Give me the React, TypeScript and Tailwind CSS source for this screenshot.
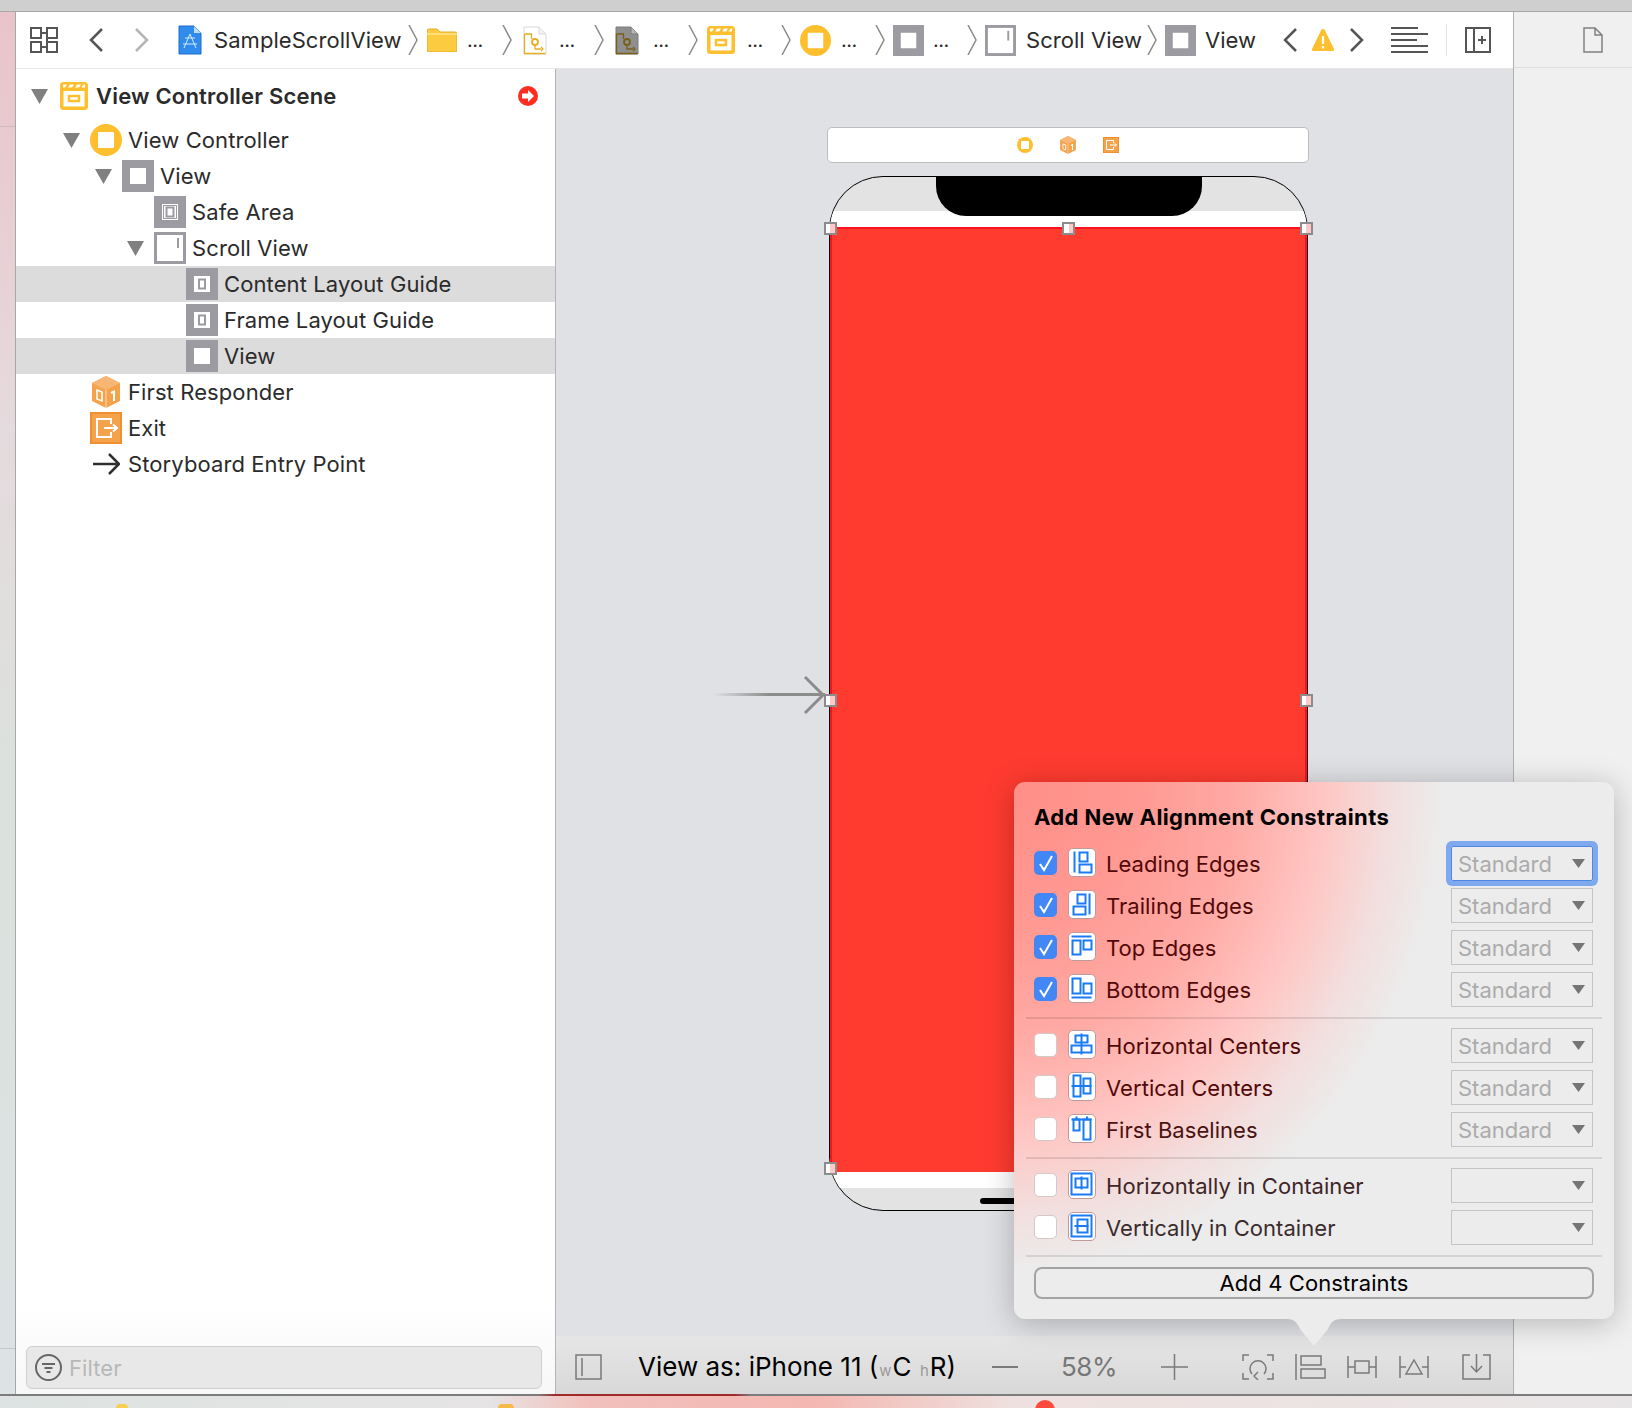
import type { ReactNode } from "react";

const BLUE = "#1a7cf5";
const GRAY = "#9b9ba1";
const YELLOW = "#fdbf2d";
const ORANGE = "#f4a24b";

function TileGlyph({ children }: { children: ReactNode }) {
  return (
    <div className="w-[28px] h-[29px] rounded-[5px] bg-white border-[1.5px] border-[#c09a9a] shrink-0 -mt-[4px]">
      <svg width="25" height="26" viewBox="1.5 1.5 25 26" fill="none" stroke={BLUE} strokeWidth="2">
        {children}
      </svg>
    </div>
  );
}

const GLYPHS: Record<string, ReactNode> = {
  leading: (<><path d="M7 4v21" /><rect x="12" y="5" width="8" height="9" /><rect x="12" y="17" width="12" height="8" /></>),
  trailing: (<><path d="M22 4v21" /><rect x="10" y="5" width="8" height="9" /><rect x="6" y="17" width="12" height="8" /></>),
  top: (<><path d="M4 5h20" /><rect x="5" y="9" width="8" height="14" /><rect x="16" y="9" width="8" height="9" /></>),
  bottom: (<><path d="M4 24h20" /><rect x="5" y="5" width="8" height="15" /><rect x="16" y="10" width="8" height="10" /></>),
  hcenter: (<><path d="M14 4v21" /><rect x="8" y="6" width="12" height="7" /><rect x="4" y="16" width="20" height="7" /></>),
  vcenter: (<><path d="M4 14.5h20" /><rect x="6" y="4" width="7" height="21" /><rect x="16" y="7" width="7" height="15" /></>),
  baseline: (<><path d="M4 6h20" /><rect x="6" y="6" width="6" height="11" /><rect x="16" y="6" width="7" height="20" /><path d="M9 3v3M19.500 3v3" /></>),
  hcontainer: (<><rect x="4" y="4" width="20" height="21" /><rect x="8" y="9" width="12" height="9" /><path d="M14 7v13" /></>),
  vcontainer: (<><rect x="4" y="4" width="20" height="21" /><rect x="10" y="8" width="10" height="13" /><path d="M7 14.500h14" /></>),
};

const CONSTRAINT_ROWS = [
  [
    { label: "Leading Edges", glyph: "leading", checked: true, value: "Standard", focus: true, color: "text-[#520808]" },
    { label: "Trailing Edges", glyph: "trailing", checked: true, value: "Standard", color: "text-[#520808]" },
    { label: "Top Edges", glyph: "top", checked: true, value: "Standard", color: "text-[#520808]" },
    { label: "Bottom Edges", glyph: "bottom", checked: true, value: "Standard", color: "text-[#520808]" },
  ],
  [
    { label: "Horizontal Centers", glyph: "hcenter", value: "Standard", color: "text-[#520808]" },
    { label: "Vertical Centers", glyph: "vcenter", value: "Standard", color: "text-[#520808]" },
    { label: "First Baselines", glyph: "baseline", value: "Standard", color: "text-[#4a1212]" },
  ],
  [
    { label: "Horizontally in Container", glyph: "hcontainer", value: "", color: "text-[#3f2526]" },
    { label: "Vertically in Container", glyph: "vcontainer", value: "", color: "text-[#3a2b2c]" },
  ],
];

function GrayTile({ size = 32, inner }: { size?: number; inner?: "view" | "guide" | "safe" | "scroll" }) {
  if (inner === "scroll") {
    return (
      <svg width={size} height={size} viewBox="0 0 32 32" className="shrink-0">
        <rect x="1.500" y="1.500" width="29" height="29" fill="#fff" stroke={GRAY} strokeWidth="3" />
        <rect x="23" y="6" width="2" height="10" fill={GRAY} />
      </svg>
    );
  }
  return (
    <svg width={size} height={size} viewBox="0 0 32 32" className="shrink-0">
      <rect width="32" height="32" fill={GRAY} />
      <rect x="8" y="8" width="16" height="16" fill="#fff" />
      {inner === "guide" && <rect x="13" y="11.500" width="6" height="9" fill="#fff" stroke={GRAY} strokeWidth="2" />}
      {inner === "safe" && (
        <>
          <rect x="9.500" y="9.500" width="13" height="13" fill="#fff" stroke={GRAY} strokeWidth="1" />
          <rect x="12.500" y="11.500" width="7" height="9" fill="#fff" stroke={GRAY} strokeWidth="2" />
        </>
      )}
    </svg>
  );
}

function SceneIcon({ w = 28, h = 28 }: { w?: number; h?: number }) {
  return (
    <svg width={w} height={h} viewBox="0 0 28 28" className="shrink-0">
      <rect width="28" height="28" rx="3.500" fill={YELLOW} />
      <rect x="3.500" y="9" width="21" height="15.500" fill="#fff" />
      <path d="M3 2.500h4l-2 3H3zM10 2.500h4l-2 3H8zM17 2.500h4l-2 3h-4zM23.500 2.500H25v3h-3.500z" fill="#fff" />
      <rect x="9" y="14" width="10" height="5" fill="#fff" stroke={YELLOW} strokeWidth="2.500" />
    </svg>
  );
}

function ControllerIcon({ size = 32 }: { size?: number }) {
  return (
    <svg width={size} height={size} viewBox="0 0 32 32" className="shrink-0">
      <circle cx="16" cy="16" r="16" fill={YELLOW} />
      <rect x="8" y="8" width="16" height="16" rx="1" fill="#fff" />
    </svg>
  );
}

function CubeIcon({ w = 28, h = 32 }: { w?: number; h?: number }) {
  return (
    <svg width={w} height={h} viewBox="0 0 28 32" className="shrink-0">
      <path d="M14 0l14 7v18l-14 7L0 25V7z" fill={ORANGE} />
      <path d="M14 0l14 7-14 7L0 7z" fill="#f7b673" />
      <path d="M14 14v18" stroke="#fff" strokeWidth="1" opacity="0.7" />
      <path d="M5 14l5 2v9l-5-2z" fill="none" stroke="#fff" strokeWidth="1.500" />
      <path d="M19 17l3-1.500V25" fill="none" stroke="#fff" strokeWidth="2" />
    </svg>
  );
}

function ExitIcon({ size = 32 }: { size?: number }) {
  return (
    <svg width={size} height={size} viewBox="0 0 32 32" className="shrink-0">
      <rect width="32" height="32" fill={ORANGE} />
      <rect x="1" y="1" width="30" height="30" fill="none" stroke="#ef8f2f" strokeWidth="2" />
      <path d="M21 12V7H7v18h14v-5" fill="none" stroke="#fff" strokeWidth="2" />
      <path d="M14 16h13M23 12.500l4 3.500-4 3.500" fill="none" stroke="#fff" strokeWidth="2" />
    </svg>
  );
}

function Triangle({ className = "" }: { className?: string }) {
  return (
    <svg width="17" height="15" viewBox="0 0 17 15" className={`shrink-0 ${className}`}>
      <path d="M0 0h17L8.500 15z" fill="#808080" />
    </svg>
  );
}

const TREE = [
  { label: "View Controller", indent: 47, arrow: true, icon: <ControllerIcon />, gap: "ml-[6px]" },
  { label: "View", indent: 79, arrow: true, icon: <GrayTile inner="view" />, gap: "ml-[6px]" },
  { label: "Safe Area", indent: 138, icon: <GrayTile inner="safe" />, gap: "ml-[6px]" },
  { label: "Scroll View", indent: 111, arrow: true, icon: <GrayTile inner="scroll" />, gap: "ml-[6px]" },
  { label: "Content Layout Guide", indent: 170, icon: <GrayTile inner="guide" />, selected: true, gap: "ml-[6px]" },
  { label: "Frame Layout Guide", indent: 170, icon: <GrayTile inner="guide" />, gap: "ml-[6px]" },
  { label: "View", indent: 170, icon: <GrayTile inner="view" />, selected: true, gap: "ml-[6px]" },
  { label: "First Responder", indent: 76, icon: <CubeIcon />, gap: "ml-[8px]" },
  { label: "Exit", indent: 74, icon: <ExitIcon />, gap: "ml-[6px]" },
  {
    label: "Storyboard Entry Point",
    indent: 77,
    icon: (
      <svg width="27" height="22" viewBox="0 0 27 22" className="shrink-0">
        <path d="M0 11h26M16 1l10 10-10 10" fill="none" stroke="#2e2e2e" strokeWidth="2.500" />
      </svg>
    ),
    gap: "ml-[8px]",
  },
];

function Crumb({ className = "" }: { className?: string }) {
  return (
    <svg width="10" height="30" viewBox="0 0 10 30" className={`shrink-0 ${className}`}>
      <path d="M1 0l8 15-8 15" fill="none" stroke="#8a8a8a" strokeWidth="1.500" />
    </svg>
  );
}

function Chevron({ dir, color, className = "" }: { dir: "left" | "right"; color: string; className?: string }) {
  return (
    <svg width="14" height="24" viewBox="0 0 14 24" className={`shrink-0 ${className}`}>
      <path d={dir === "left" ? "M13 1L2 12l11 11" : "M1 1l11 11L1 23"} fill="none" stroke={color} strokeWidth="2.500" />
    </svg>
  );
}

function Dots({ className = "" }: { className?: string }) {
  return <span className={`shrink-0 w-[16px] text-[20px] leading-none text-[#2b2b2b] tracking-[-0.5px] ${className}`}>...</span>;
}

function FileIcon({ dark }: { dark?: boolean }) {
  const stroke = dark ? "#7a5f14" : "#e8ae22";
  return (
    <svg width="24" height="29" viewBox="0 0 24 29" className="shrink-0">
      <path d="M1 1h15l7 7v20H1z" fill={dark ? "#8f8f8f" : "#fff"} stroke={dark ? "#7d7d7d" : "#d8d8d8"} strokeWidth="1" />
      <path d="M16 1v7h7" fill={dark ? "#b5b5b5" : "#f2f2f2"} stroke={dark ? "#7d7d7d" : "#d8d8d8"} strokeWidth="1" />
      <path d="M1.500 8h7v5M12 19v4h6M18 21l2 2-2 2M1.500 8v19.500h21" fill="none" stroke={stroke} strokeWidth="1.300" />
      <circle cx="12" cy="16" r="3" fill="none" stroke={stroke} strokeWidth="1.800" />
    </svg>
  );
}

function Toolbar() {
  return (
    <div className="h-[56px] shrink-0 bg-white flex items-center text-[22px] leading-none text-[#2b2b2b] tracking-[0.05px] whitespace-nowrap">
      <svg width="28" height="26" viewBox="0 0 28 26" className="shrink-0 ml-[14px]" fill="none" stroke="#555" strokeWidth="2">
        <path d="M1 1h10v10H1zM17 1h10v10H17zM1 15h10v10H1zM17 15h10v10H17z" />
        <path d="M11 6h6M11 20h6M17 11v4" />
      </svg>
      <Chevron dir="left" color="#555" className="ml-[31px]" />
      <Chevron dir="right" color="#b5b5b5" className="ml-[32px]" />
      <svg width="24" height="30" viewBox="0 0 24 30" className="shrink-0 ml-[29px]">
        <path d="M1 1h15l7 7v21H1z" fill="#2f8cec" stroke="#1c6fca" strokeWidth="1" />
        <path d="M16 1v7h7z" fill="#bcdcf9" />
        <path d="M12 9l-6 14M12 9l6 14M5 19h14M7 13h10" fill="none" stroke="#d6eafc" strokeWidth="1" />
      </svg>
      <span className="ml-[12px] w-[186px] shrink-0">SampleScrollView</span>
      <Crumb className="ml-[8px]" />
      <svg width="30" height="24" viewBox="0 0 30 24" className="shrink-0 ml-[9px]">
        <path d="M0 3a2 2 0 012-2h8l3 3h15a2 2 0 012 2v16a2 2 0 01-2 2H2a2 2 0 01-2-2z" fill="#fccb3f" stroke="#e4ad2c" strokeWidth="1" />
        <path d="M0 6h30" stroke="#ffe48a" strokeWidth="1.500" />
      </svg>
      <Dots className="ml-[10px]" />
      <Crumb className="ml-[19px]" />
      <div className="ml-[11px]"><FileIcon /></div>
      <Dots className="ml-[12px]" />
      <Crumb className="ml-[19px]" />
      <div className="ml-[11px]"><FileIcon dark /></div>
      <Dots className="ml-[14px]" />
      <Crumb className="ml-[19px]" />
      <div className="ml-[9px]"><SceneIcon /></div>
      <Dots className="ml-[12px]" />
      <Crumb className="ml-[18px]" />
      <div className="ml-[9px]"><ControllerIcon size={31} /></div>
      <Dots className="ml-[10px]" />
      <Crumb className="ml-[18px]" />
      <div className="ml-[8px]"><GrayTile size={31} inner="view" /></div>
      <Dots className="ml-[9px]" />
      <Crumb className="ml-[18px]" />
      <div className="ml-[8px]"><GrayTile size={31} inner="scroll" /></div>
      <span className="ml-[10px] w-[114px] shrink-0">Scroll View</span>
      <Crumb className="ml-[7px]" />
      <div className="ml-[8px]"><GrayTile size={31} inner="view" /></div>
      <span className="ml-[9px] w-[50px] shrink-0">View</span>
      <Chevron dir="left" color="#555" className="ml-[28px]" />
      <svg width="24" height="24" viewBox="0 0 24 24" className="shrink-0 ml-[14px]">
        <path d="M12 1c1 0 1.500.5 2 1.500l9 18.500c.5 1.200-.2 2-1.500 2h-19c-1.300 0-2-.8-1.500-2l9-18.500C10.500 1.500 11 1 12 1z" fill={YELLOW} />
        <path d="M12 8v8M12 18v2.500" stroke="#fff" strokeWidth="2.200" />
      </svg>
      <Chevron dir="right" color="#555" className="ml-[15px]" />
      <svg width="37" height="26" viewBox="0 0 37 26" className="shrink-0 ml-[27px]" stroke="#555" strokeWidth="2">
        <path d="M0 1h27M0 7h37M0 13h26M0 19h37M0 25h37" />
      </svg>
      <div className="w-px h-[32px] bg-[#e2e2e2] shrink-0 ml-[18px]" />
      <svg width="26" height="26" viewBox="0 0 26 26" className="shrink-0 ml-[18px]" fill="none" stroke="#555" strokeWidth="2">
        <path d="M1 1h24v24H1zM9 1v24M17 9v8M13 13h8" />
      </svg>
    </div>
  );
}

function BarIcon({ children, className = "", w = 30 }: { children: ReactNode; className?: string; w?: number }) {
  return (
    <svg width={w} height="26" viewBox={`0 0 ${w} 26`} fill="none" stroke="#7a7a7a" strokeWidth="1.500" className={`shrink-0 ${className}`}>
      {children}
    </svg>
  );
}

function Popover() {
  return (
    <div className="absolute left-[1014px] top-[782px] w-[600px]">
      <div className="h-[537px] rounded-[11px] bg-[radial-gradient(ellipse_430px_490px_at_0_0,#ff8e87_0%,#ff9a93_30%,#ffaaa5_52%,#ffc6c3_72%,#f2dedd_87%,#ececec_100%)] bg-[#ececec] shadow-[0_4px_30px_rgba(0,0,0,0.25)] pt-[22px] flex flex-col">
        <div className="px-[20px] h-[26px] mb-[13px] text-[22px] leading-[26px] font-bold text-black tracking-[0.4px]">
          Add New Alignment Constraints
        </div>
        {CONSTRAINT_ROWS.map((group, i) => (
          <div key={i}>
            {i > 0 && <div className="h-[2px] mx-[12px] bg-black/10 mt-[6px] mb-[6px]" />}
            {group.map((row) => (
              <div key={row.label} className="h-[42px] flex items-center pl-[20px] pr-[21px]">
                <div className={`w-[23px] h-[24px] rounded-[5px] shrink-0 -mt-[3px] flex items-center justify-center ${row.checked ? "bg-[#4287f5]" : "bg-white border border-[#d5c8c8]"}`}>
                  {row.checked && (
                    <svg width="16" height="18" viewBox="0 0 16 18">
                      <path d="M2 10l4 6L14 2" fill="none" stroke="#fff" strokeWidth="2" />
                    </svg>
                  )}
                </div>
                <div className="ml-[11px]">
                  <TileGlyph>{GLYPHS[row.glyph]}</TileGlyph>
                </div>
                <span className={`ml-[10px] text-[22px] leading-none tracking-[0.05px] ${row.color}`}>{row.label}</span>
                <div
                  className={`ml-auto w-[142px] h-[35px] -mt-[1px] pl-[6px] pr-[7px] flex items-center justify-between border-[1.5px] text-[22px] leading-none tracking-[0px] text-[#ababab] ${
                    row.focus ? "rounded-[2px] border-[#4d87e0] shadow-[0_0_0_5px_#7ea9ee]" : "border-[#c4c4c4]"
                  }`}
                >
                  <span>{row.value}</span>
                  <svg width="13" height="9" viewBox="0 0 13 9" className="shrink-0">
                    <path d="M0 0h13L6.500 9z" fill="#757575" />
                  </svg>
                </div>
              </div>
            ))}
          </div>
        ))}
        <div className="h-[2px] mx-[12px] bg-black/10 mt-[6px]" />
        <div className="mx-[20px] mt-[10px] h-[32px] rounded-[8px] border-2 border-[#a3a3a3] flex items-center justify-center text-[22px] leading-none tracking-[0.1px] text-black">
          Add 4 Constraints
        </div>
      </div>
      <svg width="56" height="26" viewBox="0 0 56 26" className="absolute left-[272px] top-[537px]">
        <path d="M0 0c8 0 11 3 14 10l13 16h2l13-16c3-7 6-10 14-10z" fill="#ececec" />
      </svg>
    </div>
  );
}

function Handle({ className }: { className: string }) {
  return <div className={`absolute w-[13px] h-[13px] border-2 border-[#8c8c8c] bg-[linear-gradient(90deg,#fff_50%,#ffc9c6_50%)] ${className}`} />;
}

export default function App() {
  return (
    <div className="relative w-[1632px] h-[1408px] overflow-hidden flex flex-col font-['Inter',sans-serif] bg-[#e8e8e8]">
      <div className="h-[12px] shrink-0 bg-[#cfcfcf] border-b border-[#a8a8a8]" />
      <div className="flex-1 flex min-h-0">
        <div className="w-[16px] shrink-0 flex flex-col bg-[linear-gradient(180deg,#eac3ca,#e5dadd_30%,#d9e2dd_60%,#dde2e4)] border-r-[1.5px] border-[#a7a7a7]">
          <div className="h-[115px] shrink-0 border-b border-[#d2b9bd]" />
          <div className="h-[1222px] shrink-0 border-b border-[#c4c8c9]" />
        </div>
        <div className="w-[1497px] shrink-0 flex flex-col">
          <Toolbar />
          <div className="flex-1 flex min-h-0 border-t-[1.5px] border-[#e6e6e6]">
            <div className="w-[540px] shrink-0 flex flex-col bg-white border-r-[1.5px] border-[#b4b4b4]">
              <div className="h-[53px] shrink-0 flex items-center pl-[15px] pr-[17px] pt-[1px] text-[#2b2b2b]">
                <Triangle />
                <div className="ml-[12px]"><SceneIcon /></div>
                <span className="ml-[8px] text-[22px] font-semibold tracking-[0.2px]">View Controller Scene</span>
                <svg width="20" height="20" viewBox="0 0 20 20" className="ml-auto shrink-0">
                  <circle cx="10" cy="10" r="10" fill="#ff2d20" />
                  <path d="M4 7.500h6V4l6 6-6 6v-3.500H4z" fill="#fff" />
                </svg>
              </div>
              {TREE.map((row, i) => (
                <div key={i} className={`h-[36px] shrink-0 flex items-center relative text-[22px] tracking-[0.1px] text-[#2b2b2b] ${row.selected ? "bg-[#dcdcdc]" : ""}`}>
                  {row.arrow && (
                    <div className="absolute top-[11px]" style={{ left: row.indent }}>
                      <Triangle />
                    </div>
                  )}
                  <div className="flex items-center" style={{ marginLeft: row.arrow ? row.indent + 27 : row.indent }}>
                    {row.icon}
                    <span className={row.gap}>{row.label}</span>
                  </div>
                </div>
              ))}
              <div className="flex-1 flex flex-col justify-end pl-[10px] pr-[13px] pb-[5px] bg-[linear-gradient(180deg,#fff_90%,#f7f7f7)]">
                <div className="h-[43px] rounded-[6px] border-[1.5px] border-[#cfcfcf] bg-[#e8e8e8] flex items-center pl-[8px]">
                  <svg width="27" height="27" viewBox="0 0 27 27" fill="none" stroke="#666" strokeWidth="2">
                    <circle cx="13.500" cy="13.500" r="12.500" />
                    <path d="M7 10h13M9.500 14h8M11.500 18h4" />
                  </svg>
                  <span className="ml-[7px] text-[22px] leading-none tracking-[0.1px] text-[#b8b8b8]">Filter</span>
                </div>
              </div>
            </div>
            <div className="flex-1 flex flex-col min-w-0">
              <div className="relative flex-1 bg-[#e0e1e5] min-h-0">
                <div className="absolute left-[271px] top-[58px] w-[482px] h-[36px] rounded-[5px] bg-white border-[1.5px] border-[#bdbdbd] flex items-center justify-center gap-[27px]">
                  <ControllerIcon size={16} />
                  <CubeIcon w={16} h={18} />
                  <ExitIcon size={16} />
                </div>
                <div className="absolute left-[273px] top-[107px] w-[479px] h-[1035px] rounded-[54px] overflow-hidden border-[1.5px] border-black bg-[#e3e3e3]">
                  <div className="h-[34px] relative">
                    <div className="absolute left-[106px] top-0 w-[266px] h-[39px] bg-black rounded-b-[30px] z-10" />
                  </div>
                  <div className="h-[16px] bg-white" />
                  <div className="h-[945px] bg-[#ff3b30] border-t-2 border-[#fb1220] border-x-2" />
                  <div className="h-[16px] bg-white" />
                  <div className="relative">
                    <div className="absolute left-[150px] top-[10px] w-[176px] h-[6px] rounded-full bg-black" />
                  </div>
                </div>
                <Handle className="left-[268px] top-[153px]" />
                <Handle className="left-[506px] top-[153px]" />
                <Handle className="left-[744px] top-[153px]" />
                <Handle className="left-[268px] top-[625px]" />
                <Handle className="left-[744px] top-[625px]" />
                <Handle className="left-[268px] top-[1093px]" />
                <div className="absolute left-[157px] top-[624px] w-[112px] h-[3px] bg-[linear-gradient(90deg,#e0e1e5,#8c8c8c_50%)]" />
                <svg width="24" height="40" viewBox="0 0 24 40" className="absolute left-[246px] top-[606px]">
                  <path d="M3 2l18 18L3 38" fill="none" stroke="#8c8c8c" strokeWidth="3" />
                </svg>
              </div>
              <div className="h-[58px] shrink-0 bg-[linear-gradient(180deg,#e6e6e6,#d8d8d8)] flex items-center relative pt-[4px]">
                <BarIcon w={27} className="ml-[19px]">
                  <path d="M1 1h25v24H1zM7 4v18" />
                </BarIcon>
                <span className="ml-[36px] text-[26px] leading-none text-black tracking-[0px] whitespace-nowrap">
                  View as: iPhone 11 (<span className="text-[15px] text-[#9a9a9a] mx-[1px]">w</span>C <span className="text-[15px] text-[#9a9a9a] mx-[1px]">h</span>R)
                </span>
                <div className="w-[26px] h-[2px] bg-[#7a7a7a] ml-[36px] shrink-0" />
                <span className="ml-[43px] text-[26px] leading-none tracking-[-0.5px] text-[#777]">58%</span>
                <BarIcon w={27} className="ml-[44px]"><path d="M0 13h27M13.500 0v26" /></BarIcon>
                <BarIcon w={32} className="ml-[54px]">
                  <path d="M1 7V1h6M25 1h6v6M1 19v6h6M31 19v6h-6M10 20a8 8 0 1 1 12 0M16 26l-4-4 4-4" />
                </BarIcon>
                <BarIcon w={31} className="ml-[21px]">
                  <path d="M1 0v26M6 2h20v9H6zM6 15h24v9H6z" />
                </BarIcon>
                <BarIcon w={30} className="ml-[21px]">
                  <path d="M1 2v22M29 2v22M1 13h7M22 13h7M8 7h14v12H8z" />
                </BarIcon>
                <BarIcon w={30} className="ml-[22px]">
                  <path d="M1 2v22M29 2v22M1 13h6M23 13h6M15 6l8 14H7z" />
                </BarIcon>
                <BarIcon w={29} className="ml-[33px]">
                  <path d="M8 1H1v24h27V1h-7M14.500 0v17M9 12l5.500 6 5.500-6" />
                </BarIcon>
              </div>
            </div>
          </div>
        </div>
        <div className="flex-1 bg-[#f0f0f0] border-l-[1.5px] border-[#b0b0b0]">
          <div className="h-[56px] border-b-[1.5px] border-[#dedede] flex items-center pl-[69px]">
            <svg width="20" height="26" viewBox="0 0 20 26" fill="none" stroke="#808080" strokeWidth="1.500">
              <path d="M1 1h11l7 7v17H1zM12 1v7h7" />
            </svg>
          </div>
        </div>
      </div>
      <div className="relative h-[14px] shrink-0 bg-[linear-gradient(90deg,#dde3e2,#e6e4e4_30%,#f2c0bc_36%,#f4b7b1_50%,#eee0de_62%,#e8e5e6_100%)]">
        <div className="h-[2px] bg-[linear-gradient(90deg,#7c7c7c_33%,#a02a2a_34%,#a02a2a_45%,#7c7c7c_46%)]" />
        <div className="absolute left-[1035px] top-[6px] w-[20px] h-[20px] rounded-full bg-[#ff4a3d]" />
        <div className="absolute left-[116px] top-[10px] w-[12px] h-[8px] rounded-full bg-[#f6cf52]" />
        <div className="absolute left-[498px] top-[10px] w-[16px] h-[8px] rounded-full bg-[#f6b94a]" />
      </div>
      <Popover />
    </div>
  );
}
